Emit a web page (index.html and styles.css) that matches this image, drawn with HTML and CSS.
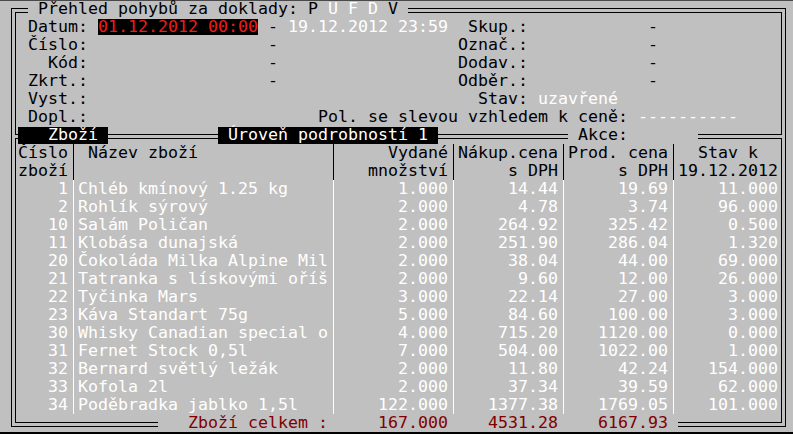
FILE: index.html
```html
<!DOCTYPE html>
<html lang="cs">
<head>
<meta charset="utf-8">
<title>Přehled pohybů za doklady</title>
<link rel="stylesheet" href="styles.css">
</head>
<body>
<div class="screen">
  <div class="frame">
    <div class="row">
      <span class="cnr-tl"></span><span class="dbl w1"></span>
      <span class="title">Přehled pohybů za doklady: P <span class="wh">U F D</span> V</span>
      <span class="dbl grow"></span><span class="cnr-tr"></span>
    </div>

    <div class="mid">
      <span class="vl"></span>
      <div class="info">
        <div class="irow"><span class="lab">Datum:</span><span class="val hl">01.12.2012 00:00</span><span class="dash">-</span><span class="val wh">19.12.2012 23:59</span><span class="rlab">Skup.:</span><span class="rval">-</span></div>
        <div class="irow"><span class="lab">Číslo:</span><span class="val"></span><span class="dash">-</span><span class="val"></span><span class="rlab">Označ.:</span><span class="rval">-</span></div>
        <div class="irow"><span class="lab">Kód:</span><span class="val"></span><span class="dash">-</span><span class="val"></span><span class="rlab">Dodav.:</span><span class="rval">-</span></div>
        <div class="irow"><span class="lab">Zkrt.:</span><span class="val"></span><span class="dash">-</span><span class="val"></span><span class="rlab">Odběr.:</span><span class="rval">-</span></div>
        <div class="irow"><span class="lab">Vyst.:</span><span class="val"></span><span class="dash"></span><span class="val"></span><span class="rlab">Stav:</span><span class="rval left wh">uzavřené</span></div>
        <div class="irow"><span class="lab">Dopl.:</span><span class="pol">Pol. se slevou vzhledem k ceně:</span><span class="wh">----------</span></div>
      </div>
      <span class="vr"></span>
    </div>

    <div class="row">
      <span class="tee-l"></span><span class="tab w9">   Zboží </span><span class="dbl w11"></span><span class="tab"> Úroveň podrobností 1 </span><span class="dbl w13"></span><span class="akce">Akce:</span><span class="dbl grow"></span><span class="tee-r"></span>
    </div>

    <div class="mid">
      <span class="vl"></span>
      <div class="tbl">
        <div class="trow head"><span>Číslo</span><span> Název zboží</span><span class="r">Vydané</span><span class="r">Nákup.cena</span><span class="r">Prod. cena</span><span>  Stav k</span></div>
        <div class="trow head"><span>zboží</span><span></span><span class="r">množství</span><span class="r">s DPH</span><span class="r">s DPH</span><span>19.12.2012</span></div>
        <div class="trow item"><span class="r">1</span><span>Chléb kmínový 1.25 kg</span><span class="r">1.000</span><span class="r">14.44</span><span class="r">19.69</span><span class="r">11.000</span></div>
        <div class="trow item"><span class="r">2</span><span>Rohlík sýrový</span><span class="r">2.000</span><span class="r">4.78</span><span class="r">3.74</span><span class="r">96.000</span></div>
        <div class="trow item"><span class="r">10</span><span>Salám Poličan</span><span class="r">2.000</span><span class="r">264.92</span><span class="r">325.42</span><span class="r">0.500</span></div>
        <div class="trow item"><span class="r">11</span><span>Klobása dunajská</span><span class="r">2.000</span><span class="r">251.90</span><span class="r">286.04</span><span class="r">1.320</span></div>
        <div class="trow item"><span class="r">20</span><span>Čokoláda Milka Alpine Mil</span><span class="r">2.000</span><span class="r">38.04</span><span class="r">44.00</span><span class="r">69.000</span></div>
        <div class="trow item"><span class="r">21</span><span>Tatranka s lískovými oříš</span><span class="r">2.000</span><span class="r">9.60</span><span class="r">12.00</span><span class="r">26.000</span></div>
        <div class="trow item"><span class="r">22</span><span>Tyčinka Mars</span><span class="r">3.000</span><span class="r">22.14</span><span class="r">27.00</span><span class="r">3.000</span></div>
        <div class="trow item"><span class="r">23</span><span>Káva Standart 75g</span><span class="r">5.000</span><span class="r">84.60</span><span class="r">100.00</span><span class="r">3.000</span></div>
        <div class="trow item"><span class="r">30</span><span>Whisky Canadian special o</span><span class="r">4.000</span><span class="r">715.20</span><span class="r">1120.00</span><span class="r">0.000</span></div>
        <div class="trow item"><span class="r">31</span><span>Fernet Stock 0,5l</span><span class="r">7.000</span><span class="r">504.00</span><span class="r">1022.00</span><span class="r">1.000</span></div>
        <div class="trow item"><span class="r">32</span><span>Bernard světlý ležák</span><span class="r">2.000</span><span class="r">11.80</span><span class="r">42.24</span><span class="r">154.000</span></div>
        <div class="trow item"><span class="r">33</span><span>Kofola 2l</span><span class="r">2.000</span><span class="r">37.34</span><span class="r">39.59</span><span class="r">62.000</span></div>
        <div class="trow item"><span class="r">34</span><span>Poděbradka jablko 1,5l</span><span class="r">122.000</span><span class="r">1377.38</span><span class="r">1769.05</span><span class="r">101.000</span></div>
      </div>
      <span class="vr"></span>
    </div>

    <div class="row">
      <span class="cnr-bl"></span><span class="dbl w14"></span><span class="sum-label">Zboží celkem :</span><span class="sum w11">167.000</span><span class="sum w10">4531.28</span><span class="sum w10">6167.93</span><span class="dbl grow gap"></span><span class="cnr-br"></span>
    </div>
  </div>
  <div class="status"></div>
</div>
</body>
</html>
```

FILE: styles.css
```css
html, body {
  margin: 0;
  padding: 0;
}

body {
  width: 793px;
  height: 434px;
  overflow: hidden;
  background: #c0c0c0;
  box-shadow: inset 0 1px 0 #4a4a4a;
}

.screen {
  padding-left: 8px;
  font-family: "DejaVu Sans Mono", "Liberation Mono", monospace;
  font-size: 16.61px;
  line-height: 18px;
  color: #000;
}

.frame {
  width: 780px;
}

.row {
  display: flex;
  height: 18px;
}

.row > span,
.irow > span,
.trow > span {
  white-space: pre;
}

.grow { flex: 1; }
.w1 { width: 10px; }
.w9 { width: 90px; }
.w10 { width: 100px; }
.w11 { width: 110px; }
.w13 { width: 130px; }
.w14 { width: 140px; }

.wh { color: #fff; }

/* double-line box drawing */
.dbl {
  background:
    linear-gradient(#000, #000) 0 8px / 100% 1px no-repeat,
    linear-gradient(#000, #000) 0 12px / 100% 1px no-repeat;
}

.vl, .vr {
  width: 10px;
  flex: none;
  background:
    linear-gradient(#000, #000) 3px 0 / 1px 100% no-repeat,
    linear-gradient(#000, #000) 7px 0 / 1px 100% no-repeat;
}

.cnr-tl, .cnr-tr, .cnr-bl, .cnr-br, .tee-l, .tee-r {
  width: 10px;
  height: 18px;
  flex: none;
}

.cnr-tl {
  background:
    linear-gradient(#000, #000) 3px 8px / 1px 10px no-repeat,
    linear-gradient(#000, #000) 3px 8px / 7px 1px no-repeat,
    linear-gradient(#000, #000) 7px 12px / 1px 6px no-repeat,
    linear-gradient(#000, #000) 7px 12px / 3px 1px no-repeat;
}

.cnr-tr {
  background:
    linear-gradient(#000, #000) 7px 8px / 1px 10px no-repeat,
    linear-gradient(#000, #000) 0 8px / 8px 1px no-repeat,
    linear-gradient(#000, #000) 3px 12px / 1px 6px no-repeat,
    linear-gradient(#000, #000) 0 12px / 4px 1px no-repeat;
}

.cnr-bl {
  background:
    linear-gradient(#000, #000) 3px 0 / 1px 13px no-repeat,
    linear-gradient(#000, #000) 3px 12px / 7px 1px no-repeat,
    linear-gradient(#000, #000) 7px 0 / 1px 9px no-repeat,
    linear-gradient(#000, #000) 7px 8px / 3px 1px no-repeat;
}

.cnr-br {
  background:
    linear-gradient(#000, #000) 7px 0 / 1px 13px no-repeat,
    linear-gradient(#000, #000) 0 12px / 8px 1px no-repeat,
    linear-gradient(#000, #000) 3px 0 / 1px 9px no-repeat,
    linear-gradient(#000, #000) 0 8px / 4px 1px no-repeat;
}

.tee-l {
  background:
    linear-gradient(#000, #000) 3px 0 / 1px 100% no-repeat,
    linear-gradient(#000, #000) 7px 0 / 1px 9px no-repeat,
    linear-gradient(#000, #000) 7px 12px / 1px 6px no-repeat,
    linear-gradient(#000, #000) 7px 8px / 3px 1px no-repeat,
    linear-gradient(#000, #000) 7px 12px / 3px 1px no-repeat;
}

.tee-r {
  background:
    linear-gradient(#000, #000) 7px 0 / 1px 100% no-repeat,
    linear-gradient(#000, #000) 3px 0 / 1px 9px no-repeat,
    linear-gradient(#000, #000) 3px 12px / 1px 6px no-repeat,
    linear-gradient(#000, #000) 0 8px / 4px 1px no-repeat,
    linear-gradient(#000, #000) 0 12px / 4px 1px no-repeat;
}

/* title row */
.title {
  margin: 0 10px;
}

/* header info */
.mid {
  display: flex;
}

.info {
  width: 760px;
}

.irow {
  display: flex;
  height: 18px;
}

.lab {
  width: 70px;
  margin-right: 10px;
  text-align: right;
}

.val {
  width: 160px;
}

.hl {
  background: linear-gradient(#000, #000) 0 1px / 100% 16px no-repeat;
  color: #f01a1a;
}

.dash {
  width: 30px;
  text-align: center;
}

.rlab {
  width: 80px;
  margin-right: 10px;
  text-align: right;
}

.rval {
  width: 120px;
  text-align: right;
}

.rval.left {
  text-align: left;
}

.pol {
  margin-left: 220px;
  margin-right: 10px;
}

/* divider */
.tab {
  background: linear-gradient(#000, #000) 0 1px / 100% 17px no-repeat;
  color: #fff;
}

.akce {
  width: 50px;
  margin: 0 70px 0 10px;
}

/* table */
.tbl {
  width: 760px;
}

.trow {
  display: grid;
  grid-template-columns: 50px 260px 120px 110px 110px 110px;
  height: 18px;
}

.trow.head { color: #000; }
.trow.item { color: #fff; }

.trow > span + span {
  padding-left: 10px;
  background: linear-gradient(currentColor, currentColor) 5px 0 / 1px 100% no-repeat;
}

.trow .r {
  text-align: right;
}

/* totals */
.sum-label {
  width: 140px;
  margin-left: 30px;
  color: #800000;
}

.sum {
  margin-left: 10px;
  text-align: right;
  color: #800000;
}

.gap {
  margin-left: 10px;
}

.status {
  margin-left: -8px;
  height: 18px;
  background: #000;
}
```
